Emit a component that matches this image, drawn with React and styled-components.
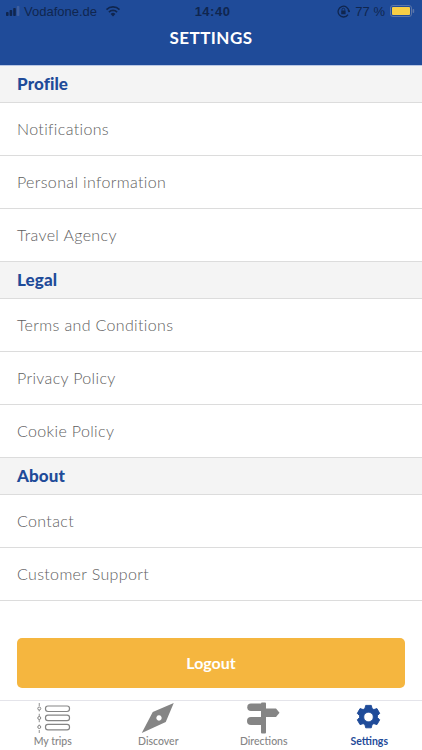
import React from "react";
import styled, { createGlobalStyle } from "styled-components";

const GlobalStyle = createGlobalStyle`
  html, body {
    margin: 0;
    padding: 0;
    background: #ffffff;
    font-family: Lato, "Open Sans", sans-serif;
  }
`;

const Screen = styled.div`
  width: 422px;
  height: 750px;
  display: flex;
  flex-direction: column;
  overflow: hidden;
  background: #ffffff;
`;

const Header = styled.header`
  height: 65px;
  flex: none;
  display: flex;
  flex-direction: column;
  background: #1f4b99;
  border-bottom: 1px solid #b9c7e4;
`;

const StatusBar = styled.div`
  height: 22px;
  padding: 0 7px 0 6px;
  display: grid;
  grid-template-columns: 1fr auto 1fr;
  align-items: center;
  color: #10264f;
  font-family: "Liberation Sans", sans-serif;
  font-size: 13px;
`;

const StatusLeft = styled.div`
  display: flex;
  align-items: center;
  gap: 3px;
`;

const StatusRight = styled.div`
  display: flex;
  align-items: center;
  justify-content: flex-end;
  gap: 5px;
`;

const Clock = styled.span`
  margin-left: 4px;
  font-weight: 700;
  font-size: 13px;
  letter-spacing: 0.5px;
`;

const Title = styled.h1`
  margin: 0;
  padding-top: 2px;
  text-align: center;
  color: #ffffff;
  font-size: 17px;
  line-height: 28px;
  font-weight: 700;
  letter-spacing: 0.45px;
`;

const SectionTitle = styled.div`
  height: 37px;
  flex: none;
  box-sizing: border-box;
  padding: 0 0 2px 17px;
  display: flex;
  align-items: center;
  background: #f4f4f4;
  border-bottom: 1px solid #dcdcdc;
  color: #1f4b99;
  font-size: 17px;
  font-weight: 900;
  letter-spacing: 0.1px;
`;

const Row = styled.div`
  height: 53px;
  flex: none;
  box-sizing: border-box;
  padding: 0 0 2px 17px;
  display: flex;
  align-items: center;
  background: #ffffff;
  border-bottom: 1px solid #dcdcdc;
  color: #5e5e5e;
  font-size: 16px;
  font-weight: 300;
  letter-spacing: 0.35px;
`;

const ButtonArea = styled.div`
  flex: 1;
  padding: 0 17px 12px;
  display: flex;
  align-items: flex-end;
`;

const LogoutButton = styled.button`
  width: 100%;
  height: 50px;
  border: none;
  border-radius: 5px;
  padding: 0 0 2px;
  background: #f5b63f;
  color: #ffffff;
  font-family: inherit;
  font-size: 16px;
  font-weight: 700;
`;

const TabBar = styled.nav`
  height: 49px;
  flex: none;
  display: grid;
  grid-template-columns: repeat(4, 1fr);
  border-top: 1px solid #e4e4ea;
`;

const Tab = styled.div`
  display: flex;
  flex-direction: column;
  align-items: center;
  justify-content: flex-end;
  padding-bottom: 2px;
  color: ${(p) => (p.$active ? "#1f4b99" : "#858585")};
  font-size: 10.5px;
  font-weight: ${(p) => (p.$active ? 700 : 500)};
  line-height: 13px;
`;

const TabIcon = styled.svg`
  display: block;
  width: 36px;
  height: 33px;
`;

const WifiSvg = styled.svg`
  margin-left: 5px;
`;

const SignalIcon = () => (
  <svg width="15" height="10" viewBox="0 0 15 10">
    <rect x="0" y="6" width="2.6" height="4" rx="0.8" fill="#10264f" />
    <rect x="3.6" y="4" width="2.6" height="6" rx="0.8" fill="#10264f" />
    <rect x="7.2" y="2" width="2.6" height="8" rx="0.8" fill="#10264f" />
    <rect x="10.8" y="0" width="2.6" height="10" rx="0.8" fill="#3f5f9f" />
  </svg>
);

const WifiIcon = () => (
  <WifiSvg width="16" height="12" viewBox="0 0 16 12">
    <path d="M8 11.5 5.6 8.9a3.4 3.4 0 0 1 4.8 0Z" fill="#10264f" />
    <path d="M3.9 7.1a5.8 5.8 0 0 1 8.2 0" fill="none" stroke="#10264f" strokeWidth="1.6" />
    <path d="M1.5 4.6a9.2 9.2 0 0 1 13 0" fill="none" stroke="#10264f" strokeWidth="1.6" />
  </WifiSvg>
);

const LockIcon = () => (
  <svg width="13" height="13" viewBox="0 0 13 13">
    <path d="M11 9.6A5.4 5.4 0 1 1 11.9 6.5" fill="none" stroke="#10264f" strokeWidth="1.3" />
    <path d="M10.4 5.6h3l-1.5 2Z" fill="#10264f" />
    <rect x="4.2" y="5.6" width="4.4" height="3.6" rx="0.5" fill="#10264f" />
    <path d="M5 5.6V4.6a1.4 1.4 0 0 1 2.8 0v1" fill="none" stroke="#10264f" strokeWidth="0.9" />
  </svg>
);

const BatteryIcon = () => (
  <svg width="25" height="12" viewBox="0 0 25 12">
    <rect x="0.5" y="0.5" width="21" height="11" rx="2.5" fill="none" stroke="#5d76a8" />
    <rect x="2" y="2" width="18" height="8" rx="1" fill="#f8cf45" />
    <rect x="22.6" y="4" width="1.6" height="4" rx="0.8" fill="#5d76a8" />
  </svg>
);

const TripsIcon = () => (
  <TabIcon viewBox="0 0 36 33">
    <g fill="none" stroke="#858585">
      <path d="M4.25 1v30" strokeWidth="0.9" strokeDasharray="3 2.4" />
      <circle cx="4.25" cy="6.5" r="1.5" fill="#fff" strokeWidth="1" />
      <circle cx="4.25" cy="16" r="1.5" fill="#fff" strokeWidth="1" />
      <circle cx="4.25" cy="25" r="1.5" fill="#fff" strokeWidth="1" />
      <rect x="10.5" y="4" width="24" height="5.5" rx="2.4" strokeWidth="1.2" />
      <rect x="10.5" y="13.2" width="24" height="5.5" rx="2.4" strokeWidth="1.2" />
      <rect x="10.5" y="22.4" width="24" height="5.5" rx="2.4" strokeWidth="1.2" />
    </g>
  </TabIcon>
);

const CompassIcon = () => (
  <TabIcon viewBox="0 0 36 33">
    <path
      fillRule="evenodd"
      d="M33.75 1 25.75 20 1.75 31 12.75 10ZM19 13.3a2.7 2.7 0 1 0 0.01 0Z"
      fill="#858585"
    />
  </TabIcon>
);

const SignpostIcon = () => (
  <TabIcon viewBox="0 0 36 33">
    <g fill="#858585">
      <rect x="15" y="0.5" width="5" height="31" rx="1" />
      <path d="M5 1.5h15v7.5H5a3.75 3.75 0 0 1 0-7.5Z" />
      <path d="M15 6.5h15l3.5 4.2-3.5 4.3H15Z" />
      <path d="M5 15h15v8H5a4 4 0 0 1 0-8Z" />
    </g>
  </TabIcon>
);

const GearIcon = () => (
  <TabIcon viewBox="0 0 36 33">
    <path
      transform="translate(17.5 15) scale(0.8) translate(-18 -17)"
      fillRule="evenodd"
      fill="#1f4b99"
      stroke="#1f4b99"
      strokeWidth="1.2"
      strokeLinejoin="round"
      d="M14.5 2.5h7l1 4 2.2 1.2 3.9-1.2 3.4 6-2.9 2.8v2.4l2.9 2.8-3.4 6-3.9-1.2-2.2 1.2-1 4h-7l-1-4-2.2-1.2-3.9 1.2-3.4-6 2.9-2.8v-2.4l-2.9-2.8 3.4-6 3.9 1.2 2.2-1.2ZM18 11a6 6 0 1 0 0.01 0Z"
    />
  </TabIcon>
);

const sections = [
  { title: "Profile", rows: ["Notifications", "Personal information", "Travel Agency"] },
  { title: "Legal", rows: ["Terms and Conditions", "Privacy Policy", "Cookie Policy"] },
  { title: "About", rows: ["Contact", "Customer Support"] },
];

const App = () => {
  return (
    <Screen>
      <GlobalStyle />
      <Header>
        <StatusBar>
          <StatusLeft>
            <SignalIcon />
            <span>Vodafone.de</span>
            <WifiIcon />
          </StatusLeft>
          <Clock>14:40</Clock>
          <StatusRight>
            <LockIcon />
            <span>77 %</span>
            <BatteryIcon />
          </StatusRight>
        </StatusBar>
        <Title>SETTINGS</Title>
      </Header>
      {sections.map((section) => (
        <React.Fragment key={section.title}>
          <SectionTitle>{section.title}</SectionTitle>
          {section.rows.map((row) => (
            <Row key={row}>{row}</Row>
          ))}
        </React.Fragment>
      ))}
      <ButtonArea>
        <LogoutButton>Logout</LogoutButton>
      </ButtonArea>
      <TabBar>
        <Tab>
          <TripsIcon />
          My trips
        </Tab>
        <Tab>
          <CompassIcon />
          Discover
        </Tab>
        <Tab>
          <SignpostIcon />
          Directions
        </Tab>
        <Tab $active>
          <GearIcon />
          Settings
        </Tab>
      </TabBar>
    </Screen>
  );
};

export default App;
